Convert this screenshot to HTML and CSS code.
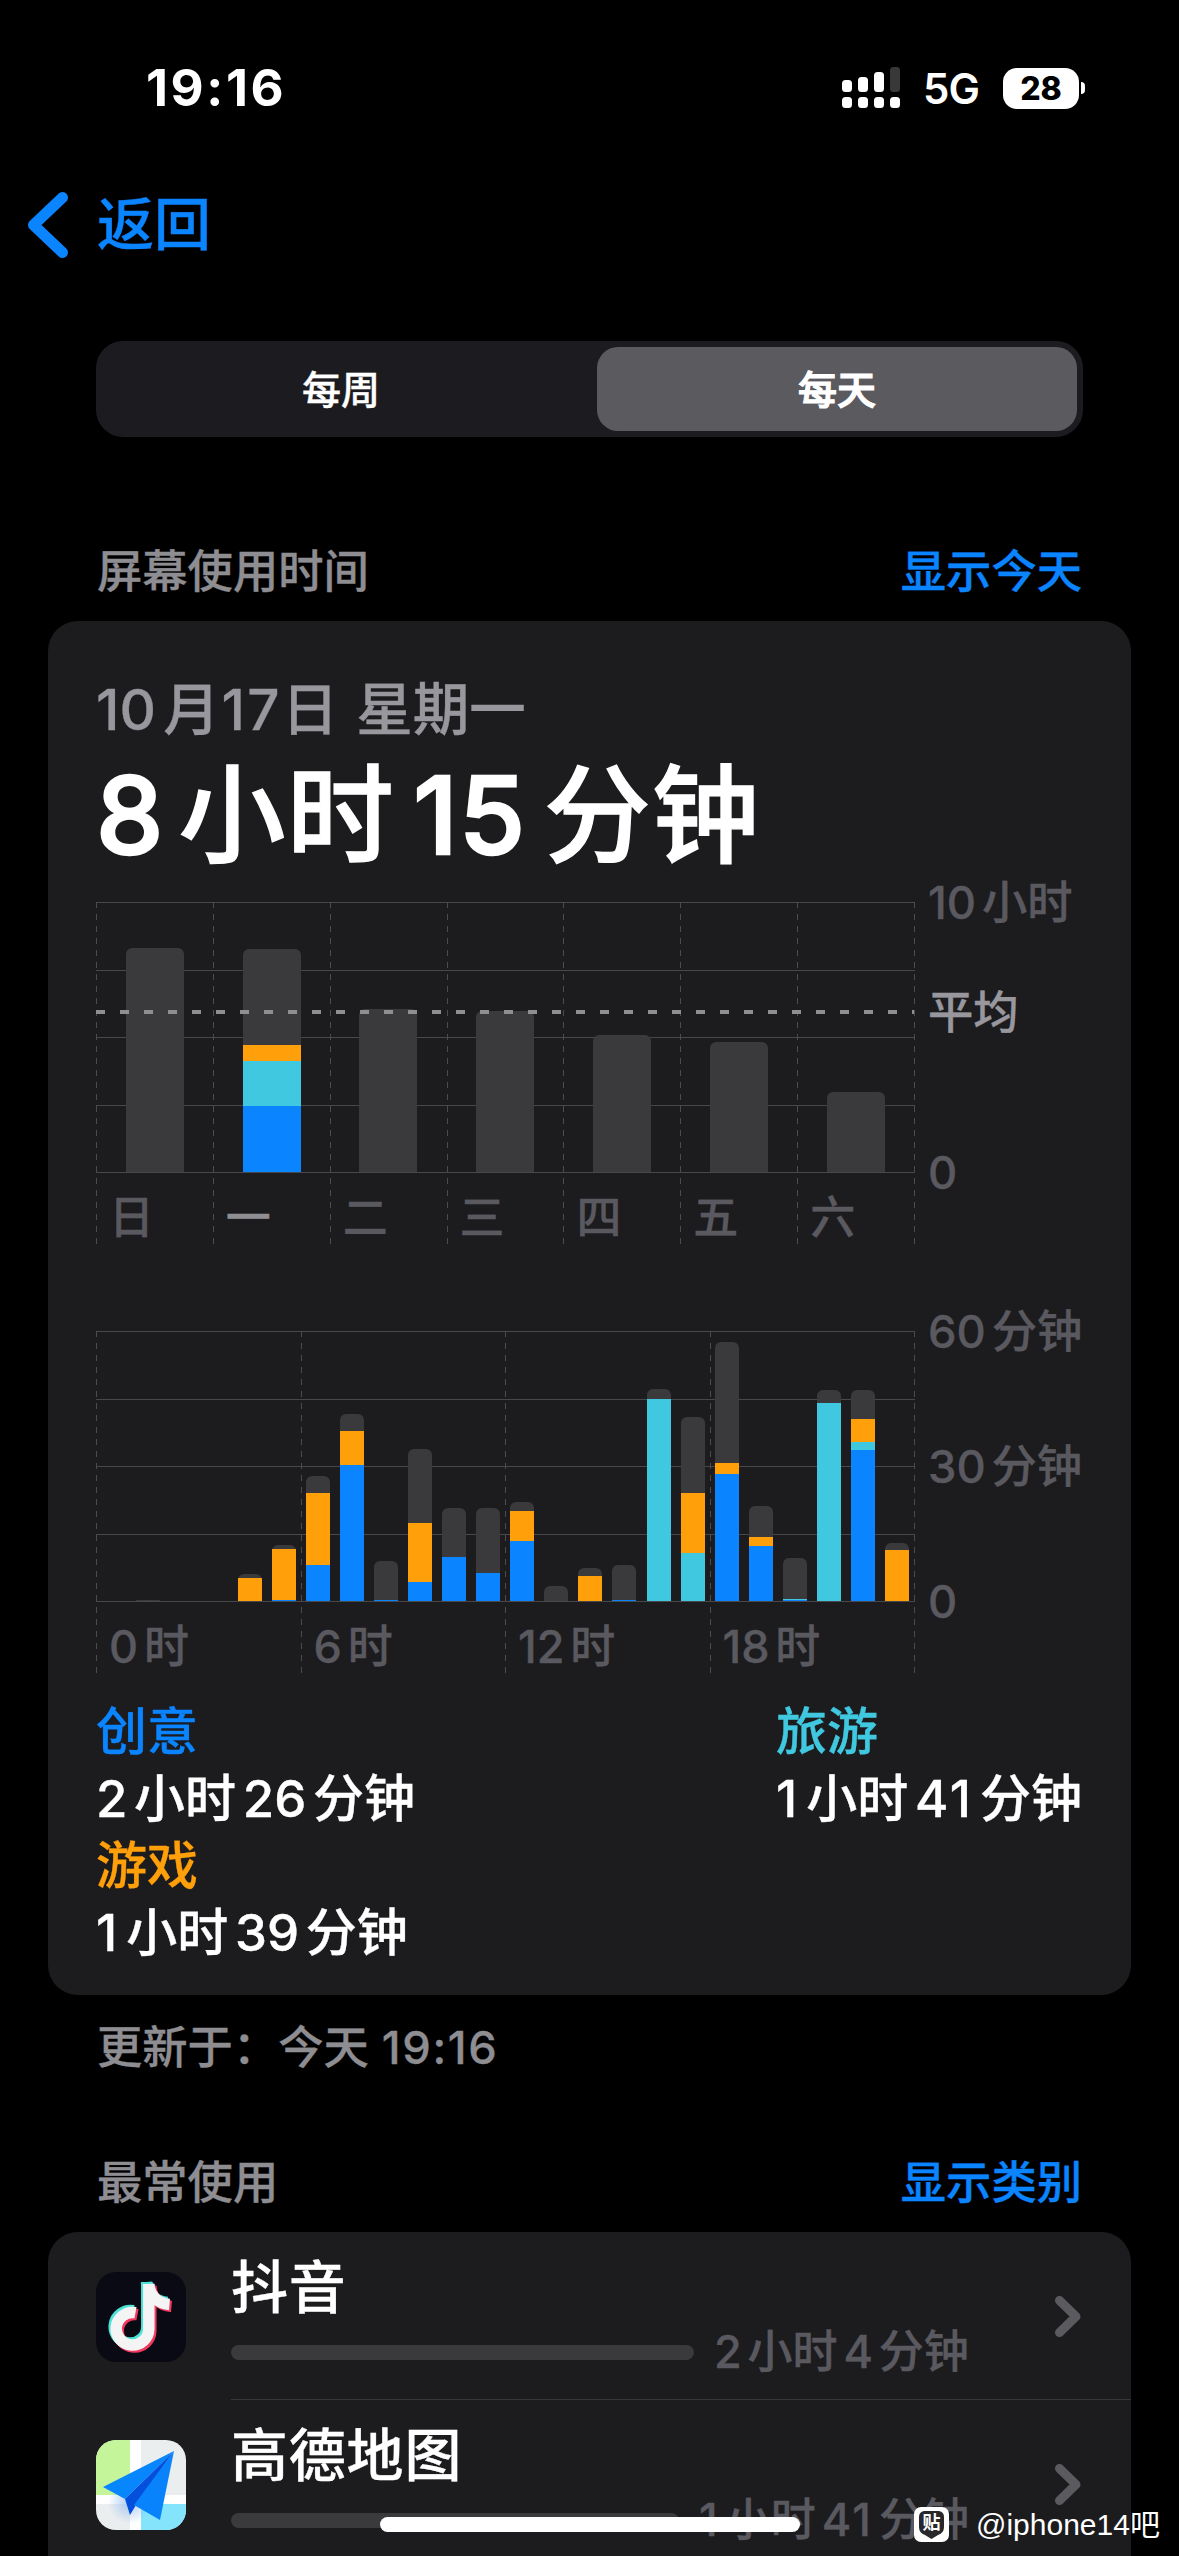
FILE: index.html
```
<!DOCTYPE html>
<html lang="zh-CN">
<head>
<meta charset="utf-8">
<title>屏幕使用时间</title>
<link rel="stylesheet" href="styles.css">
</head>
<body>
<div class="screen">
  <header class="status">
    <div class="clock">19:16</div>
    <div class="status-right">
      <svg class="signal" width="58" height="42" viewBox="0 0 58 42">
        <g fill="#fff"><rect x="0" y="13" width="10" height="12" rx="3.500"/><rect x="16" y="10" width="10" height="15" rx="3.500"/><rect x="32" y="5" width="10" height="20" rx="3.500"/><rect x="0" y="30" width="10" height="11" rx="3.500"/><rect x="16" y="30" width="10" height="11" rx="3.500"/><rect x="32" y="30" width="10" height="11" rx="3.500"/><rect x="48" y="30" width="10" height="11" rx="3.500"/></g>
        <rect x="48" y="0" width="10" height="25" rx="3.500" fill="#38383a"/>
      </svg>
      <div class="network">5G</div>
      <div class="battery"><div class="battery-body">28</div><div class="battery-cap"></div></div>
    </div>
  </header>

  <nav class="nav">
    <svg width="42" height="68" viewBox="0 0 42 68"><path d="M35.500 6.500 6.500 34 35.500 61.500" fill="none" stroke="#0a84ff" stroke-width="11" stroke-linecap="round" stroke-linejoin="round"/></svg>
    <span class="back">返回</span>
  </nav>

  <div class="segmented">
    <div class="segment">每周</div>
    <div class="segment selected">每天</div>
  </div>

  <div class="section-head usage-head"><span>屏幕使用时间</span><a>显示今天</a></div>

  <section class="card usage">
    <div class="date"><span class="n">10</span>月<span class="n day-no">17</span>日 星期一</div>
    <div class="total"><span class="n">8</span>小时<span class="n m">15</span>分钟</div>

    <div class="chart">
      <div class="plot week">
        <div class="hlines"><i></i><i></i><i></i><i></i><i></i></div>
        <div class="columns">
          <div class="col"><div class="bar" style="height:224px"></div></div>
          <div class="col"><div class="bar" style="height:223px"><b class="orange" style="height:16px"></b><b class="teal" style="height:45px"></b><b class="blue" style="height:66px"></b></div></div>
          <div class="col"><div class="bar" style="height:163px"></div></div>
          <div class="col"><div class="bar" style="height:161px"></div></div>
          <div class="col"><div class="bar" style="height:137px"></div></div>
          <div class="col"><div class="bar" style="height:130px"></div></div>
          <div class="col"><div class="bar" style="height:80px"></div></div>
        </div>
        <div class="ticks"><span>日</span><span class="on">一</span><span>二</span><span>三</span><span>四</span><span>五</span><span>六</span></div>
        <div class="average"></div>
      </div>
      <div class="scale">
        <span><span class="n">10</span>小时</span>
        <span class="avg-label">平均</span>
        <span>0</span>
      </div>
    </div>

    <div class="chart hourly">
      <div class="plot day">
        <div class="hlines"><i></i><i></i><i></i><i></i><i></i></div>
        <div class="columns">
          <div class="col"></div>
          <div class="col"><div class="bar" style="height:1px"></div></div>
          <div class="col"></div>
          <div class="col"></div>
          <div class="col"><div class="bar" style="height:27px"><b class="orange" style="height:23px"></b></div></div>
          <div class="col"><div class="bar" style="height:56px"><b class="orange" style="height:51px"></b><b class="blue" style="height:1px"></b></div></div>
          <div class="col"><div class="bar" style="height:125px"><b class="orange" style="height:72px"></b><b class="blue" style="height:36px"></b></div></div>
          <div class="col"><div class="bar" style="height:187px"><b class="orange" style="height:34px"></b><b class="blue" style="height:136px"></b></div></div>
          <div class="col"><div class="bar" style="height:40px"><b class="blue" style="height:1px"></b></div></div>
          <div class="col"><div class="bar" style="height:152px"><b class="orange" style="height:59px"></b><b class="blue" style="height:19px"></b></div></div>
          <div class="col"><div class="bar" style="height:93px"><b class="blue" style="height:44px"></b></div></div>
          <div class="col"><div class="bar" style="height:93px"><b class="blue" style="height:28px"></b></div></div>
          <div class="col"><div class="bar" style="height:99px"><b class="orange" style="height:30px"></b><b class="blue" style="height:60px"></b></div></div>
          <div class="col"><div class="bar" style="height:15px"></div></div>
          <div class="col"><div class="bar" style="height:33px"><b class="orange" style="height:25px"></b></div></div>
          <div class="col"><div class="bar" style="height:36px"><b class="blue" style="height:1px"></b></div></div>
          <div class="col"><div class="bar" style="height:212px"><b class="teal" style="height:202px"></b></div></div>
          <div class="col"><div class="bar" style="height:184px"><b class="orange" style="height:60px"></b><b class="teal" style="height:48px"></b></div></div>
          <div class="col"><div class="bar" style="height:259px"><b class="orange" style="height:11px"></b><b class="blue" style="height:127px"></b></div></div>
          <div class="col"><div class="bar" style="height:95px"><b class="orange" style="height:9px"></b><b class="blue" style="height:55px"></b></div></div>
          <div class="col"><div class="bar" style="height:43px"><b class="teal" style="height:1px"></b><b class="blue" style="height:1px"></b></div></div>
          <div class="col"><div class="bar" style="height:211px"><b class="teal" style="height:198px"></b></div></div>
          <div class="col"><div class="bar" style="height:211px"><b class="orange" style="height:23px"></b><b class="teal" style="height:8px"></b><b class="blue" style="height:151px"></b></div></div>
          <div class="col"><div class="bar" style="height:58px"><b class="orange" style="height:51px"></b></div></div>
        </div>
        <div class="ticks"><span><span class="n">0</span>时</span><span><span class="n">6</span>时</span><span><span class="n">12</span>时</span><span><span class="n">18</span>时</span></div>
      </div>
      <div class="scale">
        <span><span class="n">60</span>分钟</span>
        <span><span class="n">30</span>分钟</span>
        <span>0</span>
      </div>
    </div>

    <div class="legend">
      <div class="entry"><span class="c-blue">创意</span><span><span class="n">2</span>小时<span class="n m">26</span>分钟</span></div>
      <div class="entry"><span class="c-teal">旅游</span><span><span class="n one">1</span>小时<span class="n m one">41</span>分钟</span></div>
      <div class="entry"><span class="c-orange">游戏</span><span><span class="n one">1</span>小时<span class="n m">39</span>分钟</span></div>
    </div>
  </section>

  <div class="updated">更新于：今天 <span class="time">19:16</span></div>

  <div class="section-head apps-head"><span>最常使用</span><a>显示类别</a></div>

  <section class="card apps">
    <div class="app">
      <svg class="app-icon" width="90" height="90" viewBox="0 0 90 90">
        <defs>
          <g id="note" fill="none" stroke-width="11.500"><path d="M39.500 40.700A16.300 16.300 0 1 0 52.800 57V12"/><path d="M52.500 12C53.500 23 61 31.500 73.500 32.500"/></g>
        </defs>
        <rect width="90" height="90" rx="20" fill="#090a14"/>
        <use href="#note" x="-2" y="-2" stroke="#4be3d8"/>
        <use href="#note" x="2" y="2" stroke="#f2385f"/>
        <use href="#note" stroke="#f4f4f4"/>
      </svg>
      <div class="app-main">
        <div class="app-name">抖音</div>
        <div class="app-usage"><div class="track" style="width:463px"></div><span><span class="n">2</span>小时<span class="n m">4</span>分钟</span></div>
      </div>
      <svg class="chevron" width="28" height="43" viewBox="0 0 28 43"><path d="M5.500 5.500 22 21.500 5.500 37.500" fill="none" stroke="#5a5a5f" stroke-width="9" stroke-linecap="round" stroke-linejoin="round"/></svg>
    </div>
    <div class="app">
      <svg class="app-icon" width="90" height="90" viewBox="0 0 90 90">
        <defs>
          <clipPath id="tile"><rect width="90" height="90" rx="20"/></clipPath>
          <radialGradient id="shade"><stop offset="0" stop-color="#86b4ee" stop-opacity=".7"/><stop offset="1" stop-color="#86b4ee" stop-opacity="0"/></radialGradient>
        </defs>
        <g clip-path="url(#tile)">
          <rect width="90" height="90" fill="#ebeeef"/>
          <rect width="34" height="56" fill="#c4f59b"/>
          <rect x="44" y="64" width="46" height="26" fill="#84e4fc"/>
          <path d="M34 0H45V90H34ZM0 55H90V64H0Z" fill="#fff"/>
          <circle cx="34" cy="62" r="22" fill="url(#shade)"/>
          <path d="M78 11 7 47 29 59Z" fill="#0786fd"/>
          <path d="M78 11 29 59 34 75 40 65Z" fill="#0450dd"/>
          <path d="M78 11 38 65 64 80Z" fill="#0983fb"/>
        </g>
      </svg>
      <div class="app-main">
        <div class="app-name">高德地图</div>
        <div class="app-usage"><div class="track" style="width:448px"></div><span><span class="n one">1</span>小时<span class="n m one">41</span>分钟</span></div>
      </div>
      <svg class="chevron" width="28" height="43" viewBox="0 0 28 43"><path d="M5.500 5.500 22 21.500 5.500 37.500" fill="none" stroke="#5a5a5f" stroke-width="9" stroke-linecap="round" stroke-linejoin="round"/></svg>
    </div>
  </section>

  <div class="home-indicator"></div>
  <div class="watermark">
    <div class="tieba"><svg width="35" height="35" viewBox="0 0 35 35"><rect width="35" height="35" rx="7" fill="#fff"/><path d="M10 4H25Q30 5 30 10V20Q30 26 24 28L17.500 32 11 28Q5 26 5 20V10Q5 5 10 4Z" fill="#28282a"/></svg><span>贴</span></div>
    <span>@iphone14吧</span>
  </div>
</div>
</body>
</html>
```
FILE: styles.css
```
* { box-sizing: border-box; }

body {
  margin: 0;
  background: #000;
  color: #fff;
  font-family: Inter, "Noto Sans CJK SC", sans-serif;
  font-weight: 500;
  -webkit-text-stroke: .022em;
}

.screen {
  position: relative;
  display: flex;
  flex-direction: column;
  width: 1179px;
  height: 2556px;
  overflow: hidden;
}

/* numbers set between Chinese characters */
.n { margin-right: .13em; }
.n.m { margin-left: .13em; }
.n.one { letter-spacing: .05em; }
.n.day-no { margin: 0 0 0 .03em; letter-spacing: .04em; }

/* status bar */
.status {
  display: flex;
  flex: none;
  justify-content: space-between;
  align-items: center;
  height: 176px;
  padding: 0 94px 0 146px;
  -webkit-text-stroke: 0;
}
.clock { font-size: 51px; font-weight: 700; line-height: 60px; letter-spacing: 2.6px; }
.status-right { display: flex; align-items: center; }
.network { margin: 2px 0 0 23px; width: 80px; font-size: 42px; font-weight: 600; line-height: 50px; letter-spacing: -1px; }
.battery { display: flex; align-items: center; gap: 2px; }
.battery-body {
  width: 76px;
  height: 41px;
  border-radius: 14px;
  background: #fff;
  color: #000;
  font-size: 32px;
  font-weight: 800;
  line-height: 41px;
  text-align: center;
}
.battery-cap { width: 4px; height: 12px; border-radius: 0 4px 4px 0; background: #fff; }

/* navigation */
.nav {
  display: flex;
  flex: none;
  align-items: center;
  gap: 28px;
  height: 98px;
  padding-left: 27px;
}
.back { color: #0a84ff; font-size: 57px; line-height: 70px; }

.segmented {
  display: flex;
  flex: none;
  margin: 67px 96px 0;
  width: 987px;
  height: 96px;
  padding: 6px;
  border-radius: 27px;
  background: #1c1b20;
}
.segment {
  flex: 1;
  padding: 1px 17px 0 0;
  border-radius: 21px;
  font-size: 39px;
  line-height: 84px;
  text-align: center;
}
.segment.selected { flex: 0 0 480px; padding-right: 0; background: #5b5a5f; -webkit-text-stroke: .03em; }

.section-head {
  display: flex;
  flex: none;
  justify-content: space-between;
  padding: 0 97px;
  color: #8d8d92;
  font-size: 45.3px;
  line-height: 60px;
}
.section-head a { color: #0a84ff; }
.usage-head { margin-top: 105px; }
.apps-head { margin-top: 75px; }

.card { flex: none; margin: 0 48px; border-radius: 30px; background: #1c1c1e; }
.usage { height: 1374px; margin-top: 19px; padding: 49px 48px 0; }

.date { color: #98979e; font-size: 56.5px; line-height: 80px; word-spacing: 3px; }
.total {
  height: 125px;
  padding-top: 3px;
  font-size: 107px;
  line-height: 124px;
  letter-spacing: 1.3px;
  -webkit-text-stroke: .012em;
}
.total .n { -webkit-text-stroke: .024em; }
.total .m { margin: 0 .16em 0 .17em; }

/* charts */
.chart { display: flex; gap: 13px; height: 343px; margin-top: 27px; }
.hourly { margin-top: 86px; }
.plot { position: relative; width: 819px; height: 343px; }
.plot::after {
  content: "";
  position: absolute;
  right: 0;
  top: 0;
  width: 1px;
  height: 100%;
  background: repeating-linear-gradient(#4c4c4f 0 6px, transparent 6px 12px);
}
.hlines {
  display: flex;
  flex-direction: column;
  justify-content: space-between;
  height: 271px;
}
.hlines i { height: 1px; background: #48484a; }
.columns {
  position: absolute;
  inset: 0 1px 73px .5px;
  display: flex;
  align-items: flex-end;
}
.col { display: flex; flex: 1; justify-content: center; }
.bar {
  display: flex;
  flex-direction: column;
  justify-content: flex-end;
  width: 58px;
  border-radius: 6px 6px 0 0;
  background: #3a3a3c;
}
.day .bar { width: 24px; }
.bar b { display: block; }
.orange { background: #ff9f0a; }
.teal { background: #40c8e0; }
.blue { background: #0a84ff; }

.ticks { position: absolute; inset: 0 1px 0 0; display: flex; }
.ticks > span {
  flex: 1;
  padding: 286px 0 0 13px;
  background: repeating-linear-gradient(#4c4c4f 0 6px, transparent 6px 12px) 0 0 / 1px 100% no-repeat;
  color: #5a5960;
  font-size: 45px;
  line-height: 60px;
  white-space: nowrap;
}
.ticks > .on { color: #8e8e93; }
.average {
  position: absolute;
  left: 0;
  right: 0;
  top: 108px;
  height: 4px;
  background: repeating-linear-gradient(90deg, #8e8e93 0 9px, transparent 9px 24px);
}
.scale {
  display: flex;
  flex-direction: column;
  justify-content: space-between;
  height: 330px;
  margin-top: -29px;
  color: #5a5960;
  font-size: 45.3px;
  line-height: 60px;
  white-space: nowrap;
}
.avg-label { margin-top: -50px; color: #98979e; }

.legend {
  display: grid;
  grid-template-columns: 680px auto;
  margin-top: 24px;
  font-size: 51px;
  line-height: 67px;
  white-space: nowrap;
}
.entry { display: flex; flex-direction: column; }
.c-blue { color: #0a84ff; }
.c-teal { color: #40c8e0; }
.c-orange { color: #ff9f0a; }

.updated {
  flex: none;
  margin: 23px 97px 0;
  color: #8d8d92;
  font-size: 45.3px;
  line-height: 60px;
}
.time { margin-left: 1px; letter-spacing: 1.6px; }

/* app list */
.apps { height: 360px; margin-top: 19px; }
.app { display: flex; height: 168px; padding: 0 48px; }
.app-icon { flex: none; margin-top: 40px; }
.app-main { flex: none; width: 900px; margin-left: 45px; border-bottom: 1px solid #38383b; }
.app-name { padding-top: 16px; height: 95px; font-size: 57px; line-height: 80px; letter-spacing: .8px; }
.app-usage {
  display: flex;
  align-items: center;
  gap: 20px;
  color: #5a5960;
  font-size: 45px;
  line-height: 50px;
  white-space: nowrap;
}
.track { height: 15px; border-radius: 8px; background: #3a3a3c; }
.chevron { flex: none; margin: 63px 0 0 -77px; }

.home-indicator {
  position: absolute;
  left: 380px;
  top: 2517px;
  width: 420px;
  height: 15px;
  border-radius: 8px;
  background: #fff;
}
.watermark {
  position: absolute;
  left: 914px;
  top: 2507px;
  display: flex;
  gap: 27px;
  font: 400 30px/35px "Liberation Sans", "Noto Sans CJK SC", sans-serif;
  white-space: nowrap;
  -webkit-text-stroke: 0;
}
.tieba { position: relative; width: 35px; height: 35px; }
.tieba span {
  position: absolute;
  left: 0;
  top: 0;
  width: 35px;
  font-size: 18px;
  font-weight: 700;
  line-height: 32px;
  text-align: center;
}
```
